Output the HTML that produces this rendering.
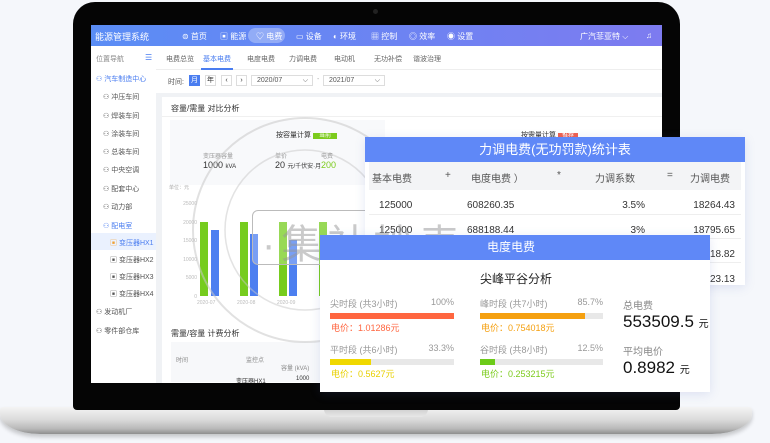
<!DOCTYPE html>
<html><head><meta charset="utf-8"><style>
*{margin:0;padding:0;box-sizing:border-box}
body{width:770px;height:443px;background:#f5f7fb;position:relative;overflow:hidden;font-family:"Liberation Sans","Noto Sans CJK SC",sans-serif;color:#333}
.a{position:absolute;white-space:nowrap}
.s{font-size:7px;color:#555}
</style></head><body>
<!-- base -->
<div class="a" style="left:0;top:407px;width:752px;height:27px;border-radius:3px 3px 40px 40px/3px 3px 20px 20px;background:linear-gradient(#f4f4f4,#dcdcdc 45%,#b9b9b9 80%,#8e8e8e);box-shadow:0 3px 4px rgba(0,0,0,.2)"></div>
<div class="a" style="left:324px;top:409px;width:104px;height:8px;border-radius:0 0 10px 10px;background:linear-gradient(#cfcfcf,#e8e8e8)"></div>
<!-- bezel -->
<div class="a" style="left:73px;top:2px;width:607px;height:408px;background:#050505;border-radius:22px 22px 4px 4px"></div>
<div class="a" style="left:373px;top:9px;width:5px;height:5px;border-radius:50%;background:#222"></div>
<!-- screen -->
<div class="a" style="left:91px;top:25px;width:571px;height:358px;background:#f0f2f5;overflow:hidden">
 <div class="a" style="left:0;top:0;width:571px;height:21px;background:linear-gradient(90deg,#5a8df5,#7d7bf0)"></div>
 <div class="a" style="left:4px;top:5px;color:#fff;font-size:9px">能源管理系统</div>
 <div class="a" style="left:157px;top:3px;width:37px;height:15px;border-radius:8px;background:rgba(255,255,255,.3)"></div>
 <div class="a" style="left:0;top:6px;color:#fff;font-size:8px;width:571px">
  <span class="a" style="left:91px">⊜ 首页</span><span class="a" style="left:129px">▣ 能源</span><span class="a" style="left:165px">♡ 电费</span><span class="a" style="left:205px">▭ 设备</span><span class="a" style="left:242px">◐ 环境</span><span class="a" style="left:280px">▦ 控制</span><span class="a" style="left:318px">◎ 效率</span><span class="a" style="left:356px">◉ 设置</span><span class="a" style="left:489px">广汽菲亚特 ⌵</span><span class="a" style="left:555px">♫</span></div>
 <!-- sidebar -->
 <div class="a" style="left:0;top:21px;width:65px;height:337px;background:#fff"></div>
 <div class="a s" style="left:5px;top:29px;color:#888">位置导航</div><div class="a" style="left:54px;top:28px;font-size:8px;color:#4a7df0">☰</div>
 <div class="a s" style="left:5px;top:49px;color:#4a7df0">⚇ 汽车制造中心</div>
 <div class="a s" style="left:12px;top:67px">⚇ 冲压车间</div>
 <div class="a s" style="left:12px;top:86px">⚇ 焊装车间</div>
 <div class="a s" style="left:12px;top:104px">⚇ 涂装车间</div>
 <div class="a s" style="left:12px;top:122px">⚇ 总装车间</div>
 <div class="a s" style="left:12px;top:140px">⚇ 中央空调</div>
 <div class="a s" style="left:12px;top:159px">⚇ 配套中心</div>
 <div class="a s" style="left:12px;top:177px">⚇ 动力部</div>
 <div class="a s" style="left:12px;top:196px;color:#4a7df0">⚇ 配电室</div>
 <div class="a" style="left:0;top:208px;width:65px;height:17px;background:#eaf1fe"></div>
 <div class="a s" style="left:19px;top:213px;color:#4a7df0"><span style="color:#f0a030">▣</span> 变压器HX1</div>
 <div class="a s" style="left:19px;top:230px">▣ 变压器HX2</div>
 <div class="a s" style="left:19px;top:247px">▣ 变压器HX3</div>
 <div class="a s" style="left:19px;top:264px">▣ 变压器HX4</div>
 <div class="a s" style="left:5px;top:282px">⚇ 发动机厂</div>
 <div class="a s" style="left:5px;top:301px">⚇ 零件部仓库</div>
 <!-- tabs -->
 <div class="a" style="left:65px;top:21px;width:506px;height:24px;background:#fff;border-bottom:1px solid #eee"></div>
 <div class="a s" style="left:0;top:29px;width:571px;color:#666">
  <span class="a" style="left:75px">电费总览</span><span class="a" style="left:112px;color:#4a7df0">基本电费</span><span class="a" style="left:156px">电度电费</span><span class="a" style="left:198px">力调电费</span><span class="a" style="left:243px">电动机</span><span class="a" style="left:283px">无功补偿</span><span class="a" style="left:322px">谐波治理</span></div>
 <div class="a" style="left:110px;top:43px;width:32px;height:2px;background:#4a7df0"></div>
 <div class="a" style="left:65px;top:45px;width:506px;height:23px;background:#fff"></div>
 <div class="a s" style="left:77px;top:52px">时间:</div>
 <div class="a" style="left:98px;top:50px;width:11px;height:11px;background:#4a7df0;color:#fff;font-size:7px;text-align:center;line-height:11px">月</div>
 <div class="a" style="left:114px;top:50px;width:11px;height:11px;border:1px solid #ddd;font-size:7px;text-align:center;line-height:9px">年</div>
 <div class="a" style="left:130px;top:50px;width:11px;height:11px;border:1px solid #ddd;font-size:7px;text-align:center;line-height:9px">‹</div>
 <div class="a" style="left:145px;top:50px;width:11px;height:11px;border:1px solid #ddd;font-size:7px;text-align:center;line-height:9px">›</div>
 <div class="a s" style="left:160px;top:50px;width:62px;height:11px;border:1px solid #ddd;padding-left:5px;line-height:9px">2020/07<span style="position:absolute;right:4px">⌵</span></div>
 <div class="a s" style="left:226px;top:51px;color:#aaa">-</div>
 <div class="a s" style="left:232px;top:50px;width:62px;height:11px;border:1px solid #ddd;padding-left:5px;line-height:9px">2021/07<span style="position:absolute;right:4px">⌵</span></div>
 <!-- card1 -->
 <div class="a" style="left:71px;top:72px;width:500px;height:230px;background:#fff"></div>
 <div class="a" style="left:80px;top:78px;font-size:8px;color:#333">容量/需量 对比分析</div>
 <div class="a" style="left:71px;top:91px;width:500px;height:1px;background:#f0f0f0"></div>
 <div class="a" style="left:79px;top:95px;width:215px;height:65px;background:#f8f9fb"></div>
 <div class="a" style="left:185px;top:105px;font-size:7px">按容量计算 <span style="background:#7ccb1d;color:#fff;padding:0 6px;font-size:6px">当前</span></div>
 <div class="a" style="left:430px;top:105px;font-size:7px">按需量计算 <span style="background:#f06050;color:#fff;padding:0 4px;font-size:6px">推荐</span></div>
 <div class="a" style="left:112px;top:126px;font-size:6px;color:#999">变压器容量</div>
 <div class="a" style="left:112px;top:135px;font-size:9px">1000 <span style="font-size:6px">kVA</span></div>
 <div class="a" style="left:184px;top:126px;font-size:6px;color:#999">单价</div>
 <div class="a" style="left:184px;top:135px;font-size:9px">20 <span style="font-size:6px">元/千伏安·月</span></div>
 <div class="a" style="left:230px;top:126px;font-size:6px;color:#999">电费</div>
 <div class="a" style="left:230px;top:135px;font-size:9px;color:#7ccb1d">200</div>
 <div class="a" style="left:78px;top:159px;font-size:5px;color:#aaa">单位：元</div>
 <div class="a" style="left:78px;top:170px;font-size:5px;color:#bbb;line-height:18.6px;width:28px;text-align:right">25000<br>20000<br>15000<br>10000<br>5000<br>0</div>
 <div class="a" style="left:109px;top:197px;width:8px;height:74px;background:#76cc1e"></div>
 <div class="a" style="left:120px;top:205px;width:8px;height:66px;background:#4c7ff0"></div>
 <div class="a" style="left:149px;top:197px;width:8px;height:74px;background:#76cc1e"></div>
 <div class="a" style="left:159px;top:209px;width:8px;height:62px;background:#4c7ff0"></div>
 <div class="a" style="left:188px;top:197px;width:8px;height:74px;background:#76cc1e"></div>
 <div class="a" style="left:198px;top:215px;width:8px;height:56px;background:#4c7ff0"></div>
 <div class="a" style="left:228px;top:197px;width:8px;height:74px;background:#76cc1e"></div>
 <div class="a" style="left:106px;top:275px;font-size:5px;color:#bbb">2020-07</div>
 <div class="a" style="left:146px;top:275px;font-size:5px;color:#bbb">2020-08</div>
 <div class="a" style="left:186px;top:275px;font-size:5px;color:#bbb">2020-09</div>
 <!-- card2 -->
 <div class="a" style="left:71px;top:297px;width:500px;height:70px;background:#fff"></div>
 <div class="a" style="left:80px;top:303px;font-size:8px">需量/容量 计费分析</div>
 <div class="a" style="left:80px;top:317px;width:160px;height:40px;background:#f7f8fa"></div>
 <div class="a" style="left:85px;top:330px;font-size:6px;color:#888">时间</div>
 <div class="a" style="left:155px;top:330px;font-size:6px;color:#888">监控点</div>
 <div class="a" style="left:190px;top:338px;font-size:6px;color:#888">容量 (kVA)</div>
 <div class="a" style="left:145px;top:351px;font-size:6px">变压器HX1</div>
 <div class="a" style="left:205px;top:351px;font-size:6px">1000</div>
</div>
<!-- watermark -->
<svg class="a" style="left:180px;top:110px" width="260" height="250"><circle cx="125" cy="120" r="112" fill="none" stroke="#c8c8c8" stroke-width="2" opacity=".55"/><circle cx="125" cy="120" r="80" fill="none" stroke="#c8c8c8" stroke-width="1.5" opacity=".5"/></svg>
<div class="a" style="left:252px;top:210px;width:212px;height:55px;border:1.5px solid #bbb;border-radius:6px;background:rgba(255,255,255,.25)"></div>
<!-- popup1 -->
<div class="a" style="left:365px;top:137px;width:380px;height:148px;background:#fff;box-shadow:0 2px 10px rgba(80,100,180,.15)">
 <div style="height:25px;background:#5f88f7;color:#fff;font-size:13px;text-align:center;line-height:25px">力调电费(无功罚款)统计表</div>
 <div style="position:absolute;left:4px;top:25px;width:372px;height:28px;background:#f3f4f6"></div>
 <div class="a" style="left:0;top:33px;font-size:10px;color:#555;width:380px">
  <span class="a" style="left:7px">基本电费</span><span class="a" style="left:80px">+</span><span class="a" style="left:106px">电度电费 ）</span><span class="a" style="left:192px">*</span><span class="a" style="left:230px">力调系数</span><span class="a" style="left:302px">=</span><span class="a" style="left:325px">力调电费</span></div>
 <div class="a" style="left:0;top:57px;font-size:10px;width:380px;line-height:24.5px">
  <span class="a" style="left:14px">125000<br>125000</span><span class="a" style="left:102px">608260.35<br>688188.44</span><span class="a" style="right:100px;text-align:right">3.5%<br>3%</span><span class="a" style="right:10px;text-align:right">18264.43<br>18795.65<br>18.82<br>23.13</span></div>
 <div class="a" style="left:4px;top:77px;width:372px;height:1px;background:#eee"></div>
 <div class="a" style="left:4px;top:101px;width:372px;height:1px;background:#eee"></div>
 <div class="a" style="left:4px;top:125px;width:372px;height:1px;background:#eee"></div>
</div>
<!-- watermark text -->
<div class="a" style="left:262px;top:212px;font-size:40px;color:rgba(150,150,150,.5);letter-spacing:6px">·集社抄表·</div>
<!-- popup2 -->
<div class="a" style="left:320px;top:235px;width:390px;height:157px;background:#fff;box-shadow:0 2px 10px rgba(80,100,180,.15)">
 <div style="height:25px;background:#5f88f7;color:#fff;font-size:12px;line-height:25px;padding-left:167px">电度电费</div>
 <div class="a" style="left:160px;top:35px;font-size:12px;color:#222">尖峰平谷分析</div>
 <div class="a" style="left:10px;top:62px;font-size:9px;color:#999;width:124px">尖时段 (共3小时)<span style="float:right">100%</span></div>
 <div class="a" style="left:10px;top:78px;width:124px;height:6px;background:#ff6640"></div>
 <div class="a" style="left:11px;top:86px;font-size:9px;color:#ff6640">电价：1.01286元</div>
 <div class="a" style="left:10px;top:108px;font-size:9px;color:#999;width:124px">平时段 (共6小时)<span style="float:right">33.3%</span></div>
 <div class="a" style="left:10px;top:124px;width:124px;height:6px;background:#e8e8e8"><div style="width:41px;height:6px;background:#f0d800"></div></div>
 <div class="a" style="left:11px;top:132px;font-size:9px;color:#e8d000">电价：0.5627元</div>
 <div class="a" style="left:160px;top:62px;font-size:9px;color:#999;width:123px">峰时段 (共7小时)<span style="float:right">85.7%</span></div>
 <div class="a" style="left:160px;top:78px;width:123px;height:6px;background:#e8e8e8"><div style="width:105px;height:6px;background:#f5a010"></div></div>
 <div class="a" style="left:161px;top:86px;font-size:9px;color:#f5a010">电价：0.754018元</div>
 <div class="a" style="left:160px;top:108px;font-size:9px;color:#999;width:123px">谷时段 (共8小时)<span style="float:right">12.5%</span></div>
 <div class="a" style="left:160px;top:124px;width:123px;height:6px;background:#e8e8e8"><div style="width:15px;height:6px;background:#6ccb18"></div></div>
 <div class="a" style="left:161px;top:132px;font-size:9px;color:#7ccb1d">电价：0.253215元</div>
 <div class="a" style="left:303px;top:62px;font-size:10px;color:#888">总电费</div>
 <div class="a" style="left:303px;top:77px;font-size:17px;color:#111">553509.5 <span style="font-size:10px">元</span></div>
 <div class="a" style="left:303px;top:108px;font-size:10px;color:#888">平均电价</div>
 <div class="a" style="left:303px;top:123px;font-size:17px;color:#111">0.8982 <span style="font-size:10px">元</span></div>
</div>
</body></html>
